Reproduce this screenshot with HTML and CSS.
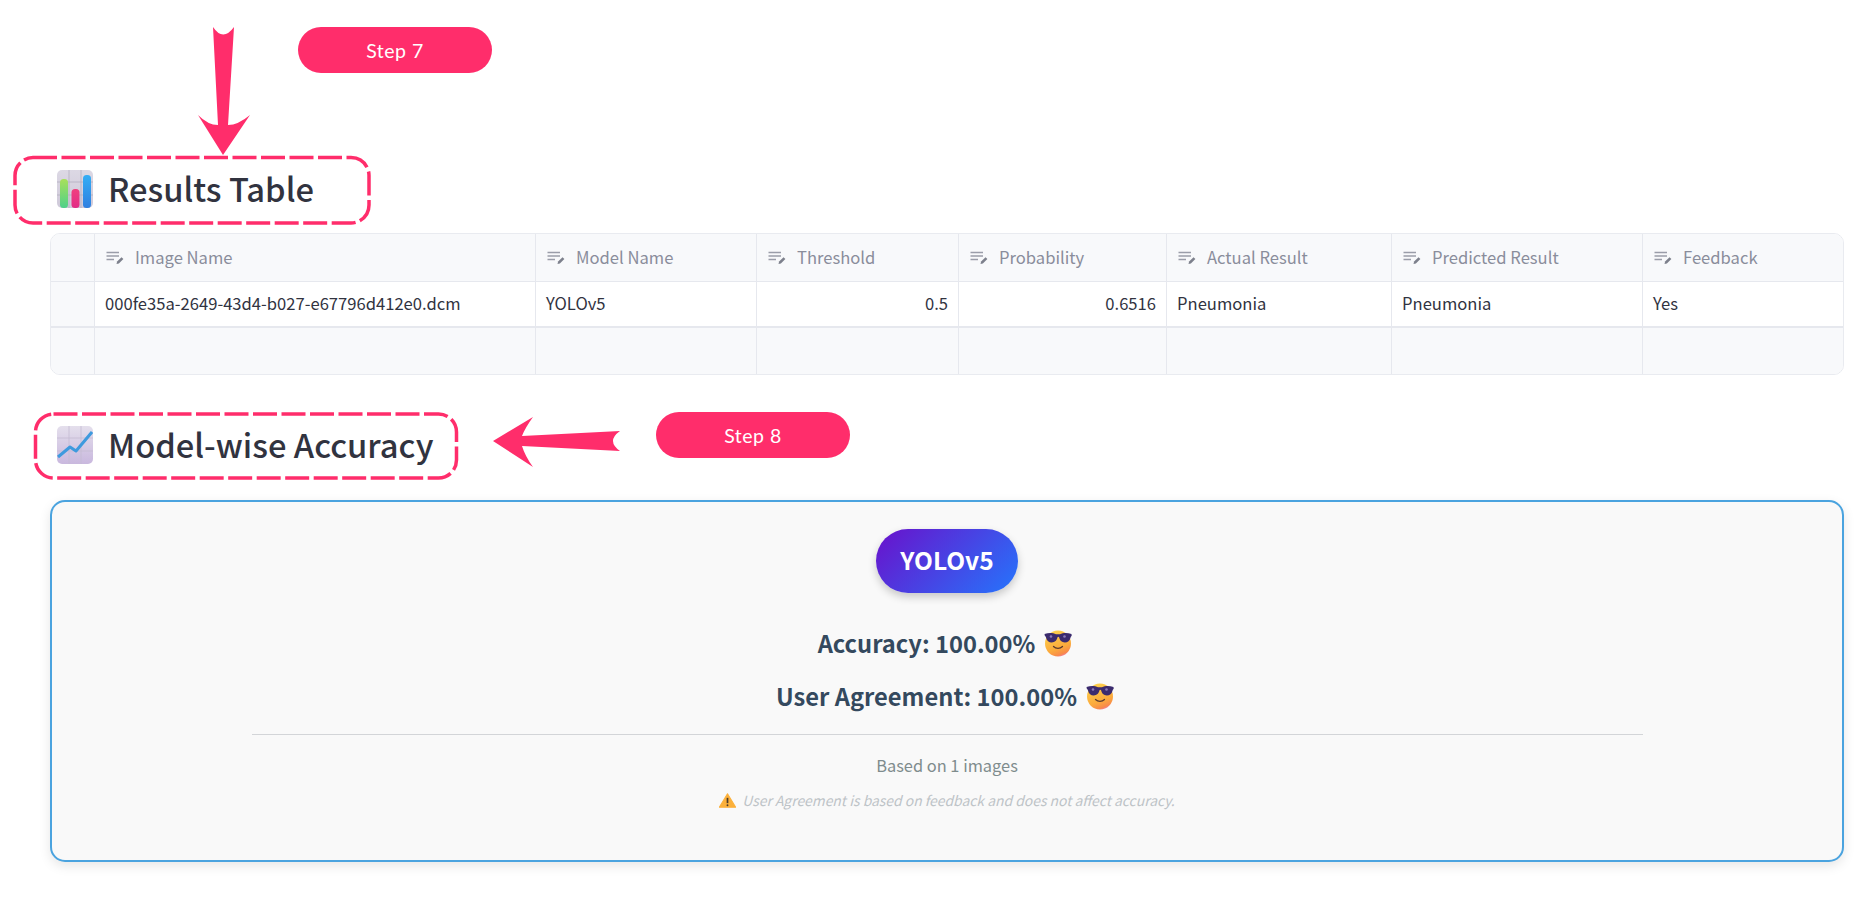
FILE: index.html
```html
<!DOCTYPE html>
<html lang="en">
<head>
<meta charset="utf-8">
<title>Results</title>
<link rel="stylesheet" href="styles.css">
</head>
<body>
<svg width="0" height="0" class="defs">
  <defs>
    <symbol id="ic-col" viewBox="0 0 18 14">
      <path d="M0.5 1.5H13M0.5 5H13M0.5 8.5H8" fill="none" stroke="#9a9da9" stroke-width="1.3"/>
      <path d="M10.500 13l.6-2.400 4.400-4.400 1.900 1.800-4.500 4.400z" fill="#7d808c"/>
    </symbol>
    <linearGradient id="face" x1="0.2" y1="0" x2="0.6" y2="1">
      <stop offset="0" stop-color="#fdd34e"/><stop offset=".7" stop-color="#fbaa3c"/><stop offset=".93" stop-color="#f88a4a"/><stop offset="1" stop-color="#f27f8f"/>
    </linearGradient>
    <symbol id="ic-cool" viewBox="0 0 28 28">
      <circle cx="14" cy="14.500" r="13" fill="url(#face)"/>
      <path transform="translate(0 -2.500)" d="M0.500 7.500c4-1.400 8.500-1.300 11.500.2h4c3-1.500 7.500-1.600 11.500-.2l.2 2c-.8.300-1 .8-1.200 1.800-.6 3-2.800 4.700-5.600 4.700-3.300 0-5.200-2.400-5.800-5.200-.3-.9-1.300-.9-1.600 0-.6 2.800-2.500 5.200-5.800 5.200-2.800 0-5-1.700-5.600-4.700-.2-1-.4-1.500-1.200-1.800z" fill="#3b2b6e"/>
      <circle cx="7" cy="7.500" r="1.300" fill="#8a7ab8"/><circle cx="20.500" cy="7.500" r="1.300" fill="#8a7ab8"/>
      <path d="M9.500 17.500c2.500 2.500 6.500 2.500 9 0" fill="none" stroke="#5b3a2e" stroke-width="1.300" stroke-linecap="round"/>
    </symbol>
  </defs>
</svg>

<main class="page">
  <h2 class="heading heading-first">
    <svg class="emoji" viewBox="0 0 36 38" aria-hidden="true">
      <defs>
        <linearGradient id="bg1" x1="0" y1="0" x2="0" y2="1"><stop offset="0" stop-color="#dcd8e4"/><stop offset="1" stop-color="#cfc9d9"/></linearGradient>
        <linearGradient id="g1" x1="0" y1="0" x2="0" y2="1"><stop offset="0" stop-color="#a8e05a"/><stop offset="1" stop-color="#4fd08a"/></linearGradient>
        <linearGradient id="g2" x1="0" y1="0" x2="0" y2="1"><stop offset="0" stop-color="#f0407f"/><stop offset="1" stop-color="#e22c86"/></linearGradient>
        <linearGradient id="g3" x1="0" y1="0" x2="0" y2="1"><stop offset="0" stop-color="#35aef5"/><stop offset="1" stop-color="#2f7fe0"/></linearGradient>
      </defs>
      <rect width="36" height="38" rx="5" fill="url(#bg1)"/>
      <path d="M12 0V38M24 0V38M0 12H36M0 25H36" stroke="#b4afbf" stroke-width=".8"/>
      <rect x="3" y="9" width="8" height="29" rx="3.500" fill="url(#g1)"/>
      <rect x="14.500" y="19" width="8" height="19" rx="3.500" fill="url(#g2)"/>
      <rect x="26" y="5" width="8" height="33" rx="3.500" fill="url(#g3)"/>
    </svg>
    <span class="heading-text">Results Table</span>
  </h2>

  <section class="grid">
    <div class="hd idx"></div>
    <div class="hd"><svg class="colic"><use href="#ic-col"/></svg><span class="lbl">Image Name</span></div>
    <div class="hd"><svg class="colic"><use href="#ic-col"/></svg><span class="lbl">Model Name</span></div>
    <div class="hd"><svg class="colic"><use href="#ic-col"/></svg><span class="lbl">Threshold</span></div>
    <div class="hd"><svg class="colic"><use href="#ic-col"/></svg><span class="lbl">Probability</span></div>
    <div class="hd"><svg class="colic"><use href="#ic-col"/></svg><span class="lbl">Actual Result</span></div>
    <div class="hd"><svg class="colic"><use href="#ic-col"/></svg><span class="lbl">Predicted Result</span></div>
    <div class="hd last"><svg class="colic"><use href="#ic-col"/></svg><span class="lbl">Feedback</span></div>

    <div class="cell idx"></div>
    <div class="cell"><span class="lbl">000fe35a-2649-43d4-b027-e67796d412e0.dcm</span></div>
    <div class="cell"><span class="lbl">YOLOv5</span></div>
    <div class="cell num"><span class="lbl">0.5</span></div>
    <div class="cell num"><span class="lbl">0.6516</span></div>
    <div class="cell"><span class="lbl">Pneumonia</span></div>
    <div class="cell"><span class="lbl">Pneumonia</span></div>
    <div class="cell last"><span class="lbl">Yes</span></div>

    <div class="blank idx"></div>
    <div class="blank"></div>
    <div class="blank"></div>
    <div class="blank"></div>
    <div class="blank"></div>
    <div class="blank"></div>
    <div class="blank"></div>
    <div class="blank last"></div>
  </section>

  <h2 class="heading heading-second">
    <svg class="emoji" viewBox="0 0 36 38" aria-hidden="true">
      <defs>
        <linearGradient id="bg2" x1="0" y1="0" x2="0" y2="1"><stop offset="0" stop-color="#e4dfec"/><stop offset="1" stop-color="#c9b8de"/></linearGradient>
      </defs>
      <rect width="36" height="38" rx="5" fill="url(#bg2)"/>
      <path d="M12 0V38M24 0V38M0 12H36M0 25H36" stroke="#c4bbd2" stroke-width=".8"/>
      <path d="M1 31L13 21L19 25L35 6" fill="none" stroke="#3e9ade" stroke-width="3" stroke-linejoin="round"/>
    </svg>
    <span class="heading-text">Model-wise Accuracy</span>
  </h2>

  <section class="card">
    <div class="model-pill">YOLOv5</div>
    <p class="metric">Accuracy: 100.00% <svg class="cool"><use href="#ic-cool"/></svg></p>
    <p class="metric">User Agreement: 100.00% <svg class="cool"><use href="#ic-cool"/></svg></p>
    <hr class="rule">
    <p class="based">Based on 1 images</p>
    <p class="note">
      <svg class="warn" viewBox="0 0 16 14" aria-hidden="true">
        <path d="M8 .6L15.700 13.400H.3z" fill="#fbb03b" stroke="#fbb03b" stroke-linejoin="round"/>
        <path d="M8 4.500V9.500" stroke="#4a3a2a" stroke-width="1.600"/>
        <circle cx="8" cy="11.500" r=".9" fill="#4a3a2a"/>
      </svg>
      <i>User Agreement is based on feedback and does not affect accuracy.</i>
    </p>
  </section>
</main>

<svg class="marks" width="1870" height="922" viewBox="0 0 1870 922" aria-hidden="true">
  <rect class="dash" x="15" y="157.500" width="354" height="65.500" rx="18"/>
  <rect class="dash" x="35.500" y="414" width="421" height="64" rx="18"/>
  <path class="arrow" d="M213 27Q223 42 234 27L228 125Q238 125 250 115L223 155L198 115Q208 125 218 125Z"/>
  <path class="arrow" d="M493 441L533 417Q525 428 522 436L620 431Q606 441 620 451L522 446Q525 456 533 467Z"/>
</svg>
<div class="step step-7">Step 7</div>
<div class="step step-8">Step 8</div>
</body>
</html>
```

FILE: styles.css
```css
html, body {
  margin: 0;
  padding: 0;
  background: #fff;
  overflow: hidden;
}
body {
  position: relative;
  width: 1870px;
  height: 922px;
  font-family: "Noto Sans CJK SC", "Noto Sans", sans-serif;
  color: #31333f;
}
.defs { position: absolute; }
.page {
  padding: 0 26px 0 50px;
}
.heading {
  display: flex;
  align-items: center;
  gap: 15px;
  margin: 0 0 0 7px;
  height: 38px;
  font-size: 32.700px;
  font-weight: 500;
  line-height: 38px;
  color: #31333f;
}
.heading-text { padding-bottom: 2px; }
.heading-first { padding-top: 170px; }
.heading-second { margin-top: 51px; }
.emoji { width: 36px; height: 38px; flex: none; }

.grid {
  display: grid;
  grid-template-columns: 44px 441px 221px 202px 208px 225px 251px 1fr;
  grid-template-rows: 48px 46px 46px;
  margin-top: 25px;
  height: 142px;
  box-sizing: border-box;
  border: 1px solid #e9ebf0;
  border-radius: 10px;
  overflow: hidden;
  font-size: 16.600px;
  line-height: 24px;
}
.lbl { padding-bottom: 2px; }
.hd, .cell, .blank {
  display: flex;
  align-items: center;
  box-sizing: border-box;
  border-right: 1px solid #e6e8ee;
  border-bottom: 1px solid #e6e8ee;
  padding: 0 10px;
  white-space: nowrap;
}
.hd {
  background: #f8f9fb;
  color: #8a8d9b;
  gap: 11px;
  padding-left: 11px;
}
.cell { background: #fff; color: #31333f; }
.blank { background: #f8f9fb; border-bottom: 0; }
.cell:nth-child(n+9) { border-bottom-width: 2px; }
.idx { background: #f8f9fb; padding: 0; }
.num { justify-content: flex-end; }
.last { border-right: 0; }
.colic { width: 18px; height: 14px; flex: none; }

.card {
  display: flex;
  flex-direction: column;
  align-items: center;
  box-sizing: border-box;
  height: 362px;
  margin-top: 36px;
  padding-top: 27px;
  background: #f9f9f9;
  border: 2px solid #4aa3df;
  border-radius: 15px;
  box-shadow: 0 4px 12px rgba(0, 0, 0, .1);
}
.model-pill {
  padding: 0 24px;
  height: 64px;
  line-height: 62px;
  border-radius: 32px;
  background: linear-gradient(135deg, #6a11cb, #2575fc);
  color: #fff;
  font-size: 24.500px;
  font-weight: 700;
  box-shadow: 0 4px 8px rgba(0, 0, 0, .2);
}
.metric {
  display: flex;
  align-items: center;
  gap: 9px;
  margin: 0;
  padding-right: 4px;
  height: 28px;
  line-height: 28px;
  font-size: 23.700px;
  font-weight: 600;
  color: #34495e;
}
.model-pill + .metric { margin-top: 36px; }
.metric + .metric { margin-top: 25px; }
.cool { width: 28px; height: 28px; flex: none; }
.rule {
  width: 1391px;
  height: 0;
  margin: 24px 0 0;
  border: 0;
  border-top: 1px solid #d3d5d8;
}
.based {
  margin: 18px 0 0;
  height: 24px;
  line-height: 24px;
  font-size: 16.400px;
  color: #7f8c8d;
}
.note {
  display: flex;
  align-items: center;
  gap: 6px;
  margin: 12px 0 0;
  height: 22px;
  line-height: 22px;
  font-size: 13.900px;
  color: #bdc3c7;
}
.warn { width: 17px; height: 15px; flex: none; }

.marks {
  position: absolute;
  left: 0;
  top: 0;
  pointer-events: none;
}
.dash {
  fill: none;
  stroke: #ff2d6b;
  stroke-width: 3.500;
  stroke-dasharray: 24 4.500;
}
.arrow { fill: #ff2d6b; }
.step {
  position: absolute;
  width: 194px;
  height: 46px;
  line-height: 47px;
  border-radius: 23px;
  background: #ff2d6b;
  color: #fff;
  text-align: center;
  font-family: "Lato", sans-serif;
  font-size: 19.500px;
  letter-spacing: .5px;
}
.step-7 { left: 298px; top: 27px; }
.step-8 { left: 656px; top: 412px; }
```
